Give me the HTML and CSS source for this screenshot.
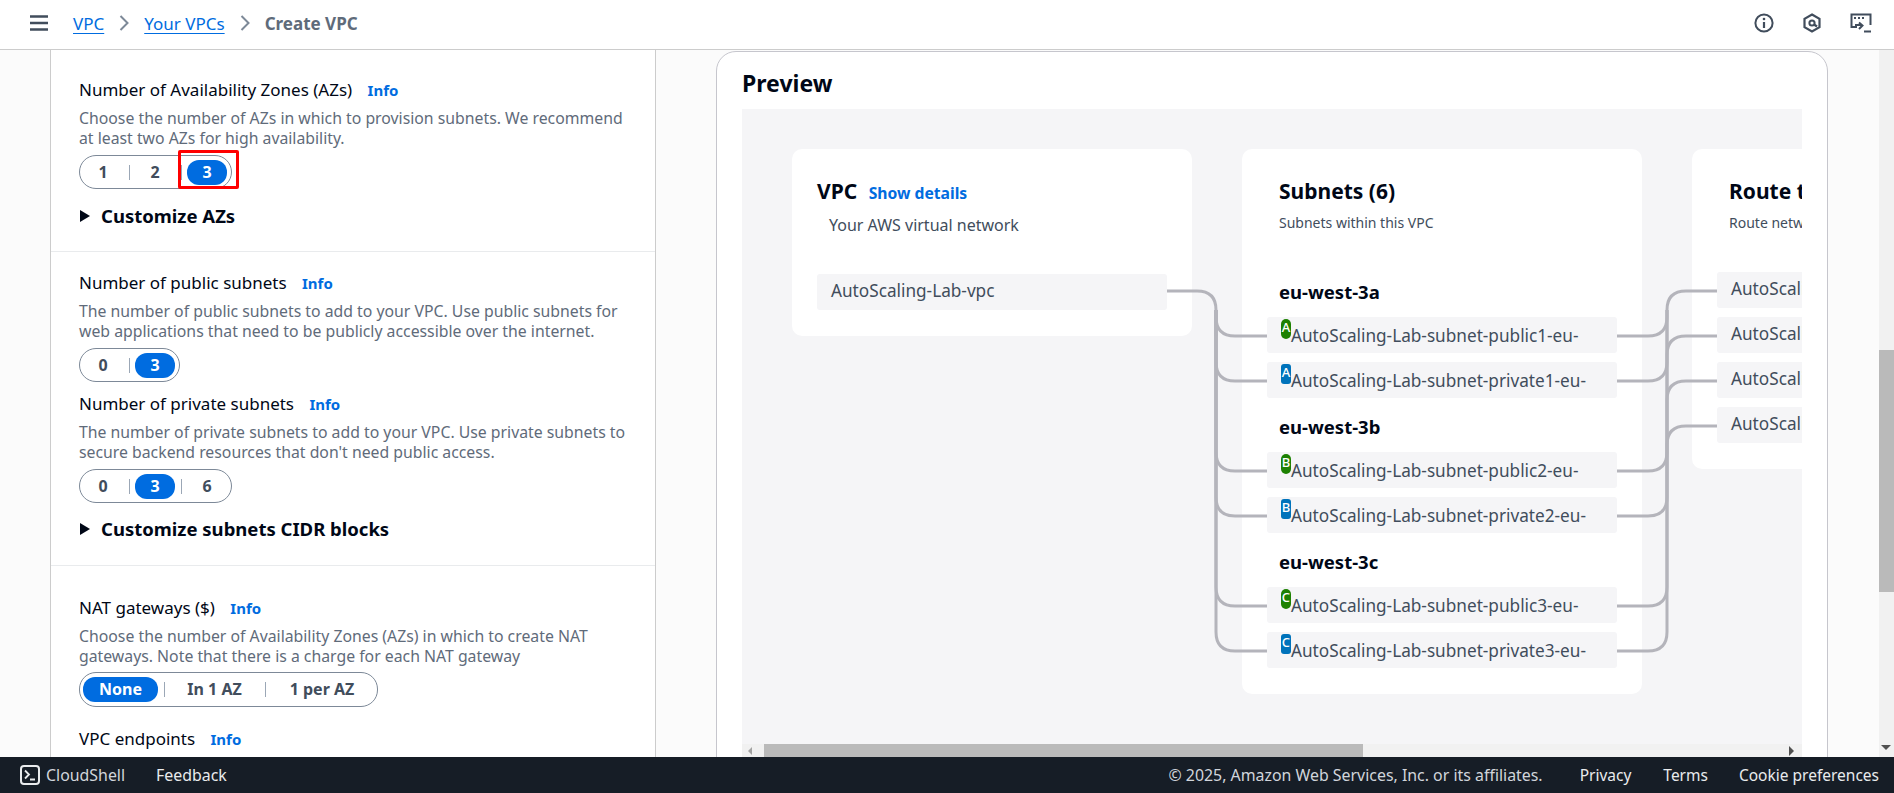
FILE: index.html
```html
<!DOCTYPE html>
<html lang="en">
<head>
  <meta charset="UTF-8">
  <meta name="viewport" content="width=device-width, initial-scale=1.0">
  <title>Create VPC</title>
  <link rel="stylesheet" href="styles.css">
</head>
<body>
  <header class="topbar">
    <svg class="menu-icon" width="18" height="16" viewBox="0 0 18 16"><path d="M0 1.5h18M0 8h18M0 14.5h18" stroke="#414d5c" stroke-width="2.6"/></svg>
    <nav class="crumbs">
      <a href="#">VPC</a>
      <svg width="10" height="18" viewBox="0 0 10 18"><path d="M1.5 2l7 7-7 7" fill="none" stroke="#7d8998" stroke-width="2"/></svg>
      <a href="#">Your VPCs</a>
      <svg width="10" height="18" viewBox="0 0 10 18"><path d="M1.5 2l7 7-7 7" fill="none" stroke="#7d8998" stroke-width="2"/></svg>
      <span class="crumb-current">Create VPC</span>
    </nav>
    <div class="top-icons">
      <svg width="20" height="20" viewBox="0 0 20 20"><circle cx="10" cy="10" r="8.6" fill="none" stroke="#414d5c" stroke-width="2"/><path d="M10 9v6" stroke="#414d5c" stroke-width="2.2"/><circle cx="10" cy="6" r="1.3" fill="#414d5c"/></svg>
      <svg width="20" height="20" viewBox="0 0 20 20"><path d="M10 1.5l7.5 4.3v8.4L10 18.5l-7.5-4.3V5.8z" fill="none" stroke="#414d5c" stroke-width="2.2"/><circle cx="10" cy="10" r="2.6" fill="none" stroke="#414d5c" stroke-width="2"/><path d="M12 11.5l3 2" stroke="#414d5c" stroke-width="2.2"/></svg>
      <svg width="22" height="20" viewBox="0 0 22 20"><path d="M7 14H1.5V1.500h19V12" fill="none" stroke="#414d5c" stroke-width="2"/><path d="M4 5h2M8 5h2M12 5h2" stroke="#414d5c" stroke-width="2"/><path d="M5 9h7M9 6.500l3.500 3L9 13" fill="none" stroke="#414d5c" stroke-width="2" transform="translate(0 3)"/><path d="M14 18.500h7" stroke="#414d5c" stroke-width="2"/></svg>
    </div>
  </header>

  <main class="page">
    <div class="form-panel">
      <section class="form-section first">
        <div class="label">Number of Availability Zones (AZs) <a href="#" class="info">Info</a></div>
        <p class="desc">Choose the number of AZs in which to provision subnets. We recommend at least two AZs for high availability.</p>
        <div class="seg-wrap">
          <div class="seg">
            <span class="seg-item">1</span><i></i><span class="seg-item">2</span><i></i><span class="seg-item on">3</span>
          </div>
          <div class="red-box"></div>
        </div>
        <div class="expander"><b class="caret"></b>Customize AZs</div>
      </section>

      <section class="form-section second">
        <div class="label">Number of public subnets <a href="#" class="info">Info</a></div>
        <p class="desc">The number of public subnets to add to your VPC. Use public subnets for web applications that need to be publicly accessible over the internet.</p>
        <div class="seg-wrap">
          <div class="seg">
            <span class="seg-item">0</span><i></i><span class="seg-item on">3</span>
          </div>
        </div>
        <div class="label next">Number of private subnets <a href="#" class="info">Info</a></div>
        <p class="desc">The number of private subnets to add to your VPC. Use private subnets to secure backend resources that don't need public access.</p>
        <div class="seg-wrap">
          <div class="seg">
            <span class="seg-item">0</span><i></i><span class="seg-item on">3</span><i></i><span class="seg-item">6</span>
          </div>
        </div>
        <div class="expander lower"><b class="caret"></b>Customize subnets CIDR blocks</div>
      </section>

      <section class="form-section third">
        <div class="label">NAT gateways ($) <a href="#" class="info">Info</a></div>
        <p class="desc">Choose the number of Availability Zones (AZs) in which to create NAT gateways. Note that there is a charge for each NAT gateway</p>
        <div class="seg-wrap tight">
          <div class="seg tall">
            <span class="seg-item on w-none">None</span><i></i><span class="seg-item w-one">In 1 AZ</span><i></i><span class="seg-item w-per">1 per AZ</span>
          </div>
        </div>
        <div class="label endpoints">VPC endpoints <a href="#" class="info">Info</a></div>
      </section>
    </div>

    <div class="preview-area">
      <div class="preview">
        <h2>Preview</h2>
        <div class="canvas">
          <div class="cards">
            <div class="card">
              <h3 class="card-title">VPC <a href="#" class="details">Show details</a></h3>
              <p class="card-sub indent">Your AWS virtual network</p>
              <div class="res first-res">AutoScaling-Lab-vpc</div>
            </div>

            <div class="card">
              <h3 class="card-title inset">Subnets (6)</h3>
              <p class="card-sub small inset">Subnets within this VPC</p>
              <h4 class="az top-az">eu-west-3a</h4>
              <div class="res subnet"><span class="badge pub">A</span>AutoScaling-Lab-subnet-public1-eu-</div>
              <div class="res subnet"><span class="badge priv">A</span>AutoScaling-Lab-subnet-private1-eu-</div>
              <h4 class="az">eu-west-3b</h4>
              <div class="res subnet"><span class="badge pub">B</span>AutoScaling-Lab-subnet-public2-eu-</div>
              <div class="res subnet"><span class="badge priv">B</span>AutoScaling-Lab-subnet-private2-eu-</div>
              <h4 class="az">eu-west-3c</h4>
              <div class="res subnet"><span class="badge pub">C</span>AutoScaling-Lab-subnet-public3-eu-</div>
              <div class="res subnet"><span class="badge priv">C</span>AutoScaling-Lab-subnet-private3-eu-</div>
            </div>

            <div class="card">
              <h3 class="card-title inset">Route tables (4)</h3>
              <p class="card-sub small inset">Route network traffic to resources</p>
              <div class="res first-res">AutoScaling-Lab-rtb-public</div>
              <div class="res">AutoScaling-Lab-rtb-private1-eu-west-3a</div>
              <div class="res">AutoScaling-Lab-rtb-private2-eu-west-3b</div>
              <div class="res">AutoScaling-Lab-rtb-private3-eu-west-3c</div>
            </div>
          </div>

          <svg class="links" width="1060" height="635" viewBox="0 0 1060 635">
            <g fill="none" stroke="#b4b4bb" stroke-width="3">
              <path d="M425 182h30q19 0 19 19v26"/>
              <path d="M474 201v7q0 19 19 19h32"/>
              <path d="M474 201v52q0 19 19 19h32"/>
              <path d="M474 201v142q0 19 19 19h32"/>
              <path d="M474 201v187q0 19 19 19h32"/>
              <path d="M474 201v277q0 19 19 19h32"/>
              <path d="M474 201v322q0 19 19 19h32"/>
              <path d="M875 227h31q19 0 19-19v-7q0-19 19-19h31"/>
              <path d="M875 362h31q19 0 19-19V201"/>
              <path d="M875 497h31q19 0 19-19V201"/>
              <path d="M875 272h31q19 0 19-19v-7q0-19 19-19h31"/>
              <path d="M875 407h31q19 0 19-19V291q0-19 19-19h31"/>
              <path d="M875 542h31q19 0 19-19V336q0-19 19-19h31"/>
            </g>
          </svg>
        </div>
        <div class="hbar">
          <span class="arrow-left"></span>
          <span class="hthumb"></span>
          <span class="arrow-right"></span>
        </div>
      </div>
    </div>

    <div class="vbar">
      <span class="vthumb"></span>
      <span class="arrow-down"></span>
    </div>
  </main>

  <footer class="bottombar">
    <svg width="20" height="20" viewBox="0 0 20 20"><rect x="1" y="1" width="18" height="18" rx="3" fill="none" stroke="#e9ebed" stroke-width="2"/><path d="M5 5.500l4 4-4 4M10 14.500h5" fill="none" stroke="#e9ebed" stroke-width="1.800"/></svg>
    <span class="shell">CloudShell</span>
    <span class="feedback">Feedback</span>
    <span class="copyright">© 2025, Amazon Web Services, Inc. or its affiliates.</span>
    <a href="#" class="privacy">Privacy</a>
    <a href="#" class="terms">Terms</a>
    <a href="#" class="cookies">Cookie preferences</a>
  </footer>
</body>
</html>
```

FILE: styles.css
```css
* {
  margin: 0;
  padding: 0;
  box-sizing: border-box;
}

html, body {
  height: 793px;
  overflow: hidden;
}

body {
  display: flex;
  flex-direction: column;
  background: #fbfbfb;
  color: #000716;
  font-family: "Noto Sans", Roboto, sans-serif;
  font-size: 16px;
}

a {
  color: #006ce0;
  text-decoration: none;
}

/* top bar */
.topbar {
  display: flex;
  align-items: center;
  flex: 0 0 50px;
  padding: 0 22px 3px 30px;
  background: #fff;
  border-bottom: 1px solid #ccc;
}

.menu-icon {
  margin-right: 25px;
}

.crumbs {
  display: flex;
  align-items: center;
  gap: 15px;
  font-size: 17px;
}

.crumbs a {
  text-decoration: underline;
  text-underline-offset: 3px;
}

.crumb-current {
  color: #5f6b7a;
  font-weight: 700;
}

.top-icons {
  display: flex;
  align-items: center;
  gap: 28px;
  margin-left: auto;
}

/* page */
.page {
  display: flex;
  flex: 1;
  min-height: 0;
  overflow: hidden;
}

.form-panel {
  flex: 0 0 606px;
  margin-left: 50px;
  background: #fff;
  border-left: 1px solid #ccc;
  border-right: 1px solid #ccc;
}

.form-section {
  padding: 0 28px;
  border-bottom: 1px solid #e9ebed;
}

.form-section.first {
  padding-top: 30px;
  padding-bottom: 23px;
}

.form-section.second {
  padding-top: 21px;
  padding-bottom: 24px;
}

.form-section.third {
  padding-top: 32px;
  border-bottom: 0;
}

.label {
  line-height: 20px;
  font-size: 17px;
}

.label.next {
  margin-top: 12px;
}

.label.endpoints {
  margin-top: 22px;
}

.info {
  margin-left: 11px;
  font-size: 15px;
  font-weight: 700;
}

.desc {
  margin-top: 8px;
  color: #5f6b7a;
  font-size: 15.8px;
  line-height: 20px;
}

.seg-wrap {
  position: relative;
  display: inline-block;
  vertical-align: top;
  margin-top: 7px;
}

.seg-wrap.tight {
  margin-top: 6px;
}

.seg {
  display: inline-flex;
  align-items: center;
  gap: 5.5px;
  height: 34px;
  padding: 0 4px 0 3px;
  background: #fff;
  border: 1px solid #7d8998;
  border-radius: 17px;
}

.seg.tall {
  height: 35px;
}

.seg i {
  width: 1px;
  height: 15px;
  background: #9ba7b6;
}

.seg-item {
  width: 40px;
  height: 25px;
  color: #414d5c;
  font-weight: 700;
  line-height: 25px;
  text-align: center;
  border-radius: 12px;
}

.seg-item.on {
  background: #006ce0;
  color: #fff;
}

.seg-item.w-none {
  width: 75px;
}

.seg-item.w-one {
  width: 89px;
}

.seg-item.w-per {
  width: 102px;
}

.red-box {
  position: absolute;
  top: -5px;
  left: 99px;
  width: 61px;
  height: 39px;
  border: 3px solid #f00;
  border-radius: 2px;
}

.expander {
  display: flex;
  align-items: center;
  margin-top: 15px;
  font-size: 18.5px;
  font-weight: 700;
  line-height: 24px;
}

.expander.lower {
  margin-top: 14px;
}

.caret {
  width: 0;
  height: 0;
  margin: 0 11px 0 1px;
  border-top: 6px solid transparent;
  border-bottom: 6px solid transparent;
  border-left: 10px solid #000716;
}

/* preview */
.preview-area {
  flex: 1;
  min-width: 0;
  padding: 1px 51px 0 60px;
}

.preview {
  display: flex;
  flex-direction: column;
  height: 740px;
  padding: 0 25px;
  background: #fff;
  border: 1px solid #c6c6cd;
  border-radius: 20px;
}

.preview h2 {
  flex: 0 0 57px;
  min-height: 0;
  font-size: 23px;
  line-height: 62px;
}

.canvas {
  position: relative;
  flex: 0 0 635px;
  background: #f5f5f7;
  overflow: hidden;
}

.cards {
  display: flex;
  align-items: flex-start;
  gap: 50px;
  padding: 40px 0 0 50px;
  width: 1500px;
}

.card {
  flex: 0 0 400px;
  padding: 28px 25px 26px;
  background: #fff;
  border-radius: 10px;
}

.card-title {
  font-size: 21px;
  line-height: 28px;
  white-space: nowrap;
}

.details {
  margin-left: 6px;
  font-size: 15.7px;
}

.card-sub {
  margin-top: 8px;
  color: #414d5c;
  font-size: 16px;
  line-height: 20px;
  white-space: nowrap;
}

.card-sub.small {
  font-size: 14px;
}

.indent {
  padding-left: 12px;
}

.inset {
  margin-left: 12px;
}

.res {
  height: 36px;
  margin-top: 9px;
  padding-left: 14px;
  background: #f5f5f7;
  border-radius: 3px;
  color: #414d5c;
  font-size: 17.2px;
  line-height: 34px;
  white-space: nowrap;
  overflow: hidden;
}

.first-res {
  margin-top: 39px;
}

.res.subnet {
  display: flex;
  align-items: flex-start;
  line-height: 38px;
}

.az {
  margin: 17px 0 13px 12px;
  font-size: 18.5px;
  line-height: 24px;
}

.az.top-az {
  margin-top: 47px;
}

.az + .res {
  margin-top: 0;
}

.badge {
  flex: 0 0 10px;
  height: 20px;
  margin-top: 2px;
  color: #fff;
  font-size: 13px;
  font-weight: 500;
  line-height: 16px;
  text-align: center;
}

.badge.pub {
  background: #1d8102;
  border-radius: 5px;
}

.badge.priv {
  background: #0073bb;
  border-radius: 3px;
}

.links {
  position: absolute;
  top: 0;
  left: 0;
  pointer-events: none;
}

/* scrollbars */
.hbar {
  display: flex;
  align-items: center;
  flex: 0 0 13px;
  background: #f1f1f1;
}

.hthumb {
  width: 599px;
  height: 13px;
  margin-left: 12px;
  background: #bababa;
}

.arrow-left {
  width: 0;
  height: 0;
  margin-left: 6px;
  border-top: 4px solid transparent;
  border-bottom: 4px solid transparent;
  border-right: 4px solid #a3a3a3;
}

.arrow-right {
  width: 0;
  height: 0;
  margin-left: auto;
  margin-right: 8px;
  border-top: 5px solid transparent;
  border-bottom: 5px solid transparent;
  border-left: 5px solid #505050;
}

.vbar {
  position: relative;
  flex: 0 0 15px;
  background: #f1f1f1;
}

.vthumb {
  display: block;
  width: 15px;
  height: 242px;
  margin-top: 300px;
  background: #bababa;
}

.arrow-down {
  position: absolute;
  right: 3px;
  bottom: 7px;
  border-left: 5px solid transparent;
  border-right: 5px solid transparent;
  border-top: 5px solid #505050;
}

/* bottom bar */
.bottombar {
  display: flex;
  align-items: center;
  flex: 0 0 36px;
  padding: 0 15px 0 20px;
  background: #161d26;
  color: #d1d5db;
  font-size: 15.9px;
}

.bottombar a {
  color: #e9ebed;
  font-size: 15.5px;
}

.shell {
  margin-left: 6px;
}

.feedback {
  margin-left: 31px;
  color: #e9ebed;
}

.copyright {
  margin-left: auto;
}

.privacy {
  margin-left: 37px;
}

.terms {
  margin-left: 32px;
}

.cookies {
  margin-left: 31px;
}
```
